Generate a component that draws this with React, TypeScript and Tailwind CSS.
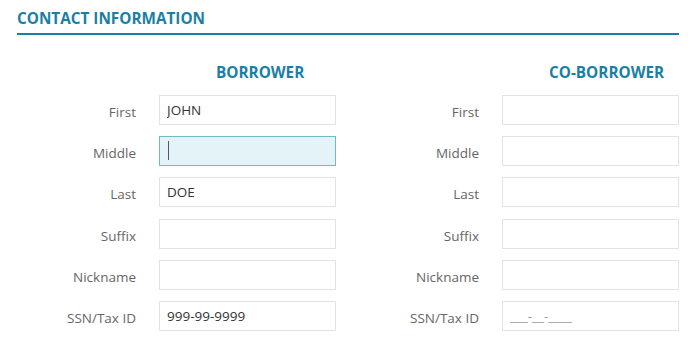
const font = { fontFamily: '"Open Sans", "Liberation Sans", sans-serif' };

interface Field {
  label: string;
  value?: string;
  placeholder?: string;
  focused?: boolean;
}

const borrower: Field[] = [
  { label: "First", value: "JOHN" },
  { label: "Middle", focused: true },
  { label: "Last", value: "DOE" },
  { label: "Suffix" },
  { label: "Nickname" },
  { label: "SSN/Tax ID", value: "999-99-9999" },
];

const coBorrower: Field[] = [
  { label: "First" },
  { label: "Middle" },
  { label: "Last" },
  { label: "Suffix" },
  { label: "Nickname" },
  { label: "SSN/Tax ID", placeholder: "___-__-____" },
];

const FieldRow = ({ field, labelWidth }: { field: Field; labelWidth: string }) => (
  <div className="flex items-center">
    <label className={`${labelWidth} text-right text-[13.5px] leading-5 text-[#666] pt-1 shrink-0`}>
      {field.label}
    </label>
    {field.focused ? (
      <div className="ml-[23px] w-[177px] h-[30px] border border-[#72b8cd] bg-[#e4f3f8] flex items-center pl-[8px]">
        <span className="w-px h-[19px] bg-[#555]" />
      </div>
    ) : (
      <input
        readOnly
        value={field.value ?? ""}
        placeholder={field.placeholder}
        className="ml-[23px] w-[177px] h-[30px] border border-[#e1e4e7] bg-white px-[7px] text-[13.5px] text-[#333] placeholder:text-[#9a9a9a] outline-none"
        style={font}
      />
    )}
  </div>
);

export default function App() {
  return (
    <div className="w-[688px] h-[338px] bg-white pl-[17px] pr-[9px] pt-2" style={font}>
      {/* section title */}
      <div className="border-b-2 border-[#1a7fa5] pb-[5px]">
        <h2 className="text-[15.3px] leading-5 font-bold text-[#1a7fa5]">CONTACT INFORMATION</h2>
      </div>

      <div className="flex mt-[27px]">
        {/* borrower */}
        <div className="flex flex-col">
          <h3 className="pl-[199px] text-[15.3px] leading-5 font-bold text-[#1a7fa5]">BORROWER</h3>
          <div className="flex flex-col gap-[11.4px] mt-[12.5px]">
            {borrower.map((f) => (
              <FieldRow key={f.label} field={f} labelWidth="w-[119px]" />
            ))}
          </div>
        </div>

        {/* co-borrower */}
        <div className="flex flex-col">
          <h3 className="pl-[213px] text-[15.3px] leading-5 font-bold text-[#1a7fa5]">CO-BORROWER</h3>
          <div className="flex flex-col gap-[11.4px] mt-[12.5px]">
            {coBorrower.map((f) => (
              <FieldRow key={f.label} field={f} labelWidth="w-[143px]" />
            ))}
          </div>
        </div>
      </div>
    </div>
  );
}
